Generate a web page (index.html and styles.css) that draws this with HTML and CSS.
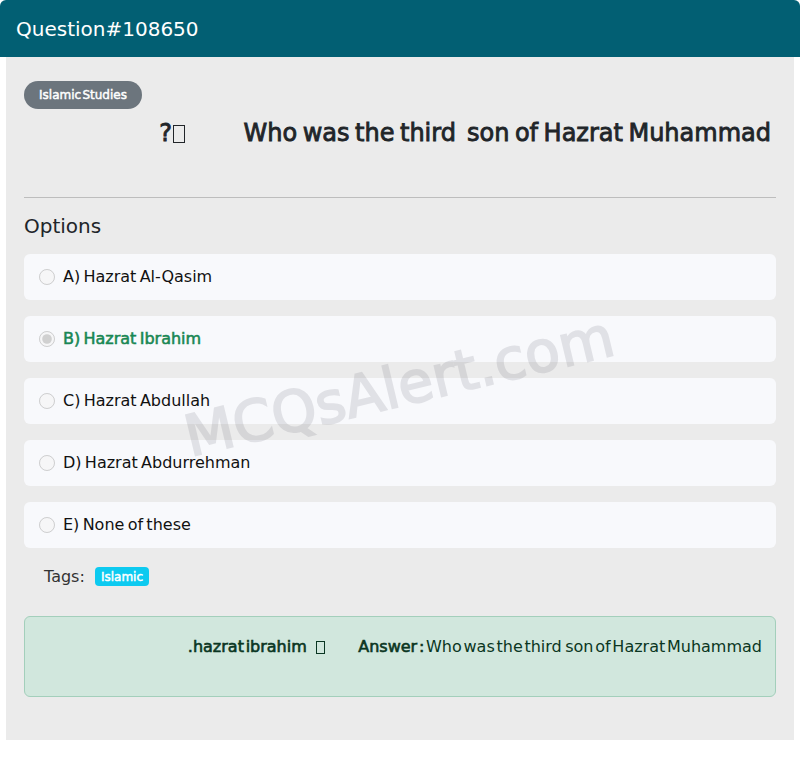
FILE: index.html
```html
<!DOCTYPE html>
<html lang="en">
<head>
<meta charset="utf-8">
<title>Question#108650</title>
<link rel="stylesheet" href="styles.css">
</head>
<body>
<div class="card">
  <div class="card-header">Question#108650</div>
  <div class="card-body">
    <div class="watermark">MCQsAlert.com</div>
    <div class="cat-row"><span class="badge-pill">Islamic Studies</span></div>
    <h3 class="question" dir="rtl">Who was the third&nbsp; son of Hazrat Muhammad &rlm;<span class="tofu q-tofu">ﷺ</span>&rlm;?</h3>
    <hr class="divider">
    <h5 class="options-title">Options</h5>
    <div class="options">
      <label class="option"><input type="radio" name="q" disabled><span>A) Hazrat Al-Qasim</span></label>
      <label class="option correct"><input type="radio" name="q" checked disabled><span>B) Hazrat Ibrahim</span></label>
      <label class="option"><input type="radio" name="q" disabled><span>C) Hazrat Abdullah</span></label>
      <label class="option"><input type="radio" name="q" disabled><span>D) Hazrat Abdurrehman</span></label>
      <label class="option"><input type="radio" name="q" disabled><span>E) None of these</span></label>
    </div>
    <div class="tags">Tags: <span class="badge-tag">Islamic</span></div>
    <div class="answer" dir="rtl"><p><strong class="fb">Answer :</strong> Who was the third&nbsp; son of Hazrat Muhammad &rlm;<span class="tofu a-tofu">ﷺ</span>&rlm; <strong class="fb">hazrat ibrahim.</strong></p></div>
  </div>
</div>
</body>
</html>
```
FILE: styles.css
```css
* { box-sizing: border-box; }
html, body { margin: 0; padding: 0; background: #fff; }
body {
  font-family: "DejaVu Sans", sans-serif;
  font-size: 16px;
  line-height: 1.5;
  color: #212529;
}
.fb {
  font-weight: normal;
  -webkit-text-stroke: 0.038em currentColor;
}
.card {
  width: 800px;
  border-radius: 6px;
  background: #fff;
  padding-bottom: 6px;
}
.card-header {
  height: 57px;
  background: #025f73;
  color: #fff;
  font-size: 20px;
  display: flex;
  align-items: center;
  padding: 0 16px;
  border-radius: 6px 6px 0 0;
}
.card-body {
  position: relative;
  margin: 0 6px;
  background: #ebebeb;
  padding: 24px 18px 43px;
  overflow: hidden;
}
.watermark {
  position: absolute;
  left: 173px;
  top: 353px;
  font-size: 57px;
  font-weight: normal;
  color: #70707c;
  -webkit-text-stroke: 1.8px #70707c;
  opacity: 0.17;
  transform: rotate(-13.5deg);
  transform-origin: left top;
  white-space: nowrap;
  pointer-events: none;
  line-height: 1;
  z-index: 2;
}
.cat-row { display: flex; }
.badge-pill {
  display: inline-block;
  background: #6c757d;
  color: #fff;
  font-size: 12px;
  font-weight: normal;
  -webkit-text-stroke: 0.45px #fff;
  word-spacing: -0.21em;
  line-height: 1;
  padding: 8px 15px;
  border-radius: 14px;
}
.question {
  margin: 9px 0 0;
  padding-right: 5px;
  font-size: 24px;
  font-weight: normal;
  -webkit-text-stroke: 0.85px #212529;
  word-spacing: -2.1px;
  line-height: 30px;
  text-align: right;
}
.tofu {
  display: inline-block;
  overflow: hidden;
  color: transparent;
  -webkit-text-stroke: 0;
  border: 1.7px solid #212529;
  width: 12px;
  height: 18px;
  vertical-align: -2px;
  line-height: 10px;
  font-size: 8px;
}
.q-tofu {
  margin-left: 1px;
  margin-right: 53px;
}
.a-tofu {
  border-color: #0a3622;
  width: 9px;
  height: 13px;
  border-width: 1.2px;
  margin-left: 7px;
  margin-right: 32px;
}
.divider {
  margin: 49px 0 0;
  border: 0;
  border-top: 1px solid #bdbdbd;
  height: 0;
}
.options-title {
  margin: 16px 0 0;
  font-size: 20px;
  font-weight: normal;
  line-height: 24px;
}
.options {
  margin-top: 16px;
  display: flex;
  flex-direction: column;
  gap: 16px;
}
.option {
  display: flex;
  align-items: center;
  gap: 8px;
  height: 46px;
  padding-left: 15px;
  background: #f8f9fc;
  border-radius: 6px;
  color: #111;
  word-spacing: -1.8px;
}
.option input {
  width: 16px;
  height: 16px;
  margin: 0;
}
.option.correct span {
  color: #198754;
  -webkit-text-stroke: 0.55px #198754;
}
.tags {
  margin-top: 17px;
  padding-left: 20px;
  line-height: 24px;
  color: #333;
}
.badge-tag {
  display: inline-block;
  background: #0dcaf0;
  color: #fff;
  font-size: 12px;
  -webkit-text-stroke: 0.45px #fff;
  line-height: 1;
  padding: 4px 6px 3px;
  border-radius: 4px;
  vertical-align: 1px;
  margin-left: 5px;
}
.answer {
  margin-top: 27px;
  height: 81px;
  background: #d1e7dd;
  border: 1px solid #a3cfbb;
  border-radius: 6px;
  color: #0a3622;
  padding: 18px 13px 0;
  word-spacing: -0.21em;
}
.answer p { margin: 0; }
```
